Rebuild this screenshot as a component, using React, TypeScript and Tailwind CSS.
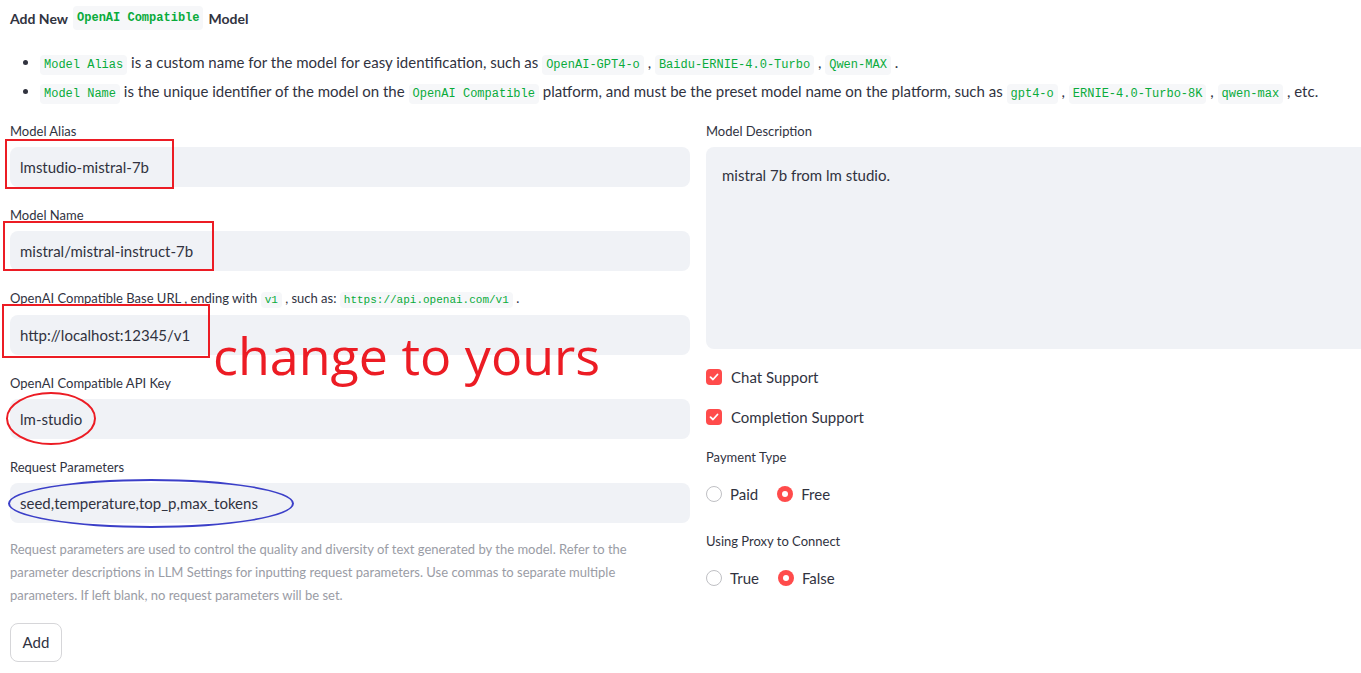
import React from "react";

const sans = { fontFamily: 'Lato, "Noto Sans", sans-serif' };

function Code({ children, small }: { children: React.ReactNode; small?: boolean }) {
  return (
    <code
      className={
        small
          ? "rounded-[4px] bg-[#f6f7f9] px-[4px] py-[2px] font-['Liberation_Mono',monospace] text-[11px] text-[#09ab3b]"
          : "rounded-[4px] bg-[#f6f7f9] px-[4px] py-[3px] font-['Liberation_Mono',monospace] text-[12px] text-[#09ab3b]"
      }
    >
      {children}
    </code>
  );
}

function Label({ children }: { children: React.ReactNode }) {
  return (
    <div className="mb-[8px] flex h-[16px] items-center text-[13px] leading-[16px] text-[#31333f]">
      {children}
    </div>
  );
}

function TextInput({ label, value }: { label: React.ReactNode; value: string }) {
  return (
    <div>
      <Label>{label}</Label>
      <div className="flex h-[40px] items-center rounded-lg bg-[#f0f2f6] px-[10px] text-[15px] text-[#31333f]">
        {value}
      </div>
    </div>
  );
}

function Checkbox({ label }: { label: string }) {
  return (
    <div className="flex h-[24px] items-center gap-[9px] text-[15px] text-[#31333f]">
      <span className="flex h-[16px] w-[16px] items-center justify-center rounded-[4px] bg-[#ff4b4b]">
        <svg width="10" height="10" viewBox="0 0 10 10" fill="none">
          <path d="M1.5 5.2 L4 7.5 L8.5 2.5" stroke="white" strokeWidth="1.8" strokeLinecap="round" strokeLinejoin="round" />
        </svg>
      </span>
      {label}
    </div>
  );
}

function Radio({ label, checked }: { label: string; checked?: boolean }) {
  return (
    <div className="flex items-center gap-[8px] text-[15px] text-[#31333f]">
      {checked ? (
        <span className="flex h-[16px] w-[16px] items-center justify-center rounded-full bg-[#ff4b4b]">
          <span className="h-[6px] w-[6px] rounded-full bg-white" />
        </span>
      ) : (
        <span className="h-[16px] w-[16px] rounded-full border border-[#bfc0c4] bg-white" />
      )}
      {label}
    </div>
  );
}

function RadioGroup({ label, options, value }: { label: string; options: string[]; value: string }) {
  return (
    <div>
      <Label>{label}</Label>
      <div className="mt-[17px] flex h-[24px] items-center gap-[19px]">
        {options.map((o) => (
          <Radio key={o} label={o} checked={o === value} />
        ))}
      </div>
    </div>
  );
}

export default function App() {
  return (
    <div className="relative h-[673px] w-[1361px] overflow-hidden bg-white text-[#31333f]" style={sans}>
      <div className="w-[1400px] px-[10px]">
        <h2 className="flex h-[36px] items-center gap-[5px] text-[14px] font-bold">
          Add New <Code>OpenAI Compatible</Code> Model
        </h2>

        <ul className="mt-[12px] list-disc pl-[30px] text-[15px] marker:text-[#31333f]">
          <li className="h-[29px] leading-[29px]">
            <Code>Model Alias</Code> is a custom name for the model for easy identification, such as{" "}
            <Code>OpenAI-GPT4-o</Code> , <Code>Baidu-ERNIE-4.0-Turbo</Code> , <Code>Qwen-MAX</Code> .
          </li>
          <li className="h-[29px] leading-[29px]">
            <Code>Model Name</Code> is the unique identifier of the model on the <Code>OpenAI Compatible</Code>{" "}
            platform, and must be the preset model name on the platform, such as <Code>gpt4-o</Code> ,{" "}
            <Code>ERNIE-4.0-Turbo-8K</Code> , <Code>qwen-max</Code> , etc.
          </li>
        </ul>

        <div className="mt-[17px] grid grid-cols-[680px_680px] gap-[16px]">
          <div className="flex flex-col gap-[20px]">
            <TextInput label="Model Alias" value="lmstudio-mistral-7b" />
            <TextInput label="Model Name" value="mistral/mistral-instruct-7b" />
            <TextInput
              label={
                <span className="whitespace-pre">
                  OpenAI Compatible Base URL , ending with <Code small>v1</Code> , such as:{" "}
                  <Code small>https://api.openai.com/v1</Code> .
                </span>
              }
              value="http://localhost:12345/v1"
            />
            <TextInput label="OpenAI Compatible API Key" value="lm-studio" />
            <div>
              <TextInput label="Request Parameters" value="seed,temperature,top_p,max_tokens" />
              <p className="mt-[15px] w-[640px] text-[13px] leading-[23px] text-[#9a9ca5]">
                Request parameters are used to control the quality and diversity of text generated by the model. Refer
                to the parameter descriptions in LLM Settings for inputting request parameters. Use commas to separate
                multiple parameters. If left blank, no request parameters will be set.
              </p>
              <button className="mt-[16px] h-[39px] w-[52px] rounded-lg border border-[#d6d6d9] bg-white text-[15px] text-[#31333f]">
                Add
              </button>
            </div>
          </div>

          <div>
            <Label>Model Description</Label>
            <div className="h-[202px] rounded-lg bg-[#f0f2f6] px-[16px] pt-[16px] text-[15px] leading-[24px]">
              mistral 7b from lm studio.
            </div>
            <div className="mt-[16px] flex flex-col gap-[16px]">
              <Checkbox label="Chat Support" />
              <Checkbox label="Completion Support" />
            </div>
            <div className="mt-[20px]">
              <RadioGroup label="Payment Type" options={["Paid", "Free"]} value="Free" />
            </div>
            <div className="mt-[27px]">
              <RadioGroup label="Using Proxy to Connect" options={["True", "False"]} value="False" />
            </div>
          </div>
        </div>
      </div>

      {/* annotations */}
      <div className="pointer-events-none absolute left-[5px] top-[139px] h-[50px] w-[169px] border-2 border-[#ec1c24]" />
      <div className="pointer-events-none absolute left-[3px] top-[221px] h-[50px] w-[211px] border-2 border-[#ec1c24]" />
      <div className="pointer-events-none absolute left-[2px] top-[304px] h-[54px] w-[208px] border-2 border-[#ec1c24]" />
      <div className="pointer-events-none absolute left-[6px] top-[392px] h-[53px] w-[90px] rounded-[50%] border-2 border-[#ec1c24]" />
      <div className="pointer-events-none absolute left-[8px] top-[479px] h-[49px] w-[286px] rounded-[50%] border-2 border-[#3b3fc8]" />
      <div className="pointer-events-none absolute left-[213px] top-[320px] font-['Open_Sans',sans-serif] text-[52px] leading-[70px] text-[#ec1c24]">
        change to yours
      </div>
    </div>
  );
}
